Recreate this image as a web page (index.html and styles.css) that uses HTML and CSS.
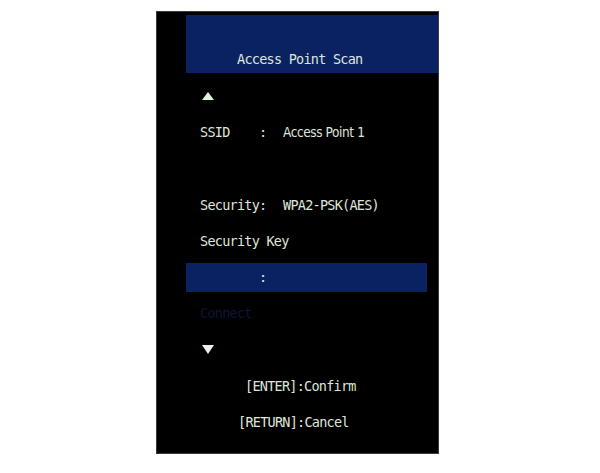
FILE: index.html
```html
<!DOCTYPE html>
<html>
<head>
<meta charset="utf-8">
<link rel="stylesheet" href="styles.css">
</head>
<body>
<div class="screen">
  <div class="header"><span class="title">Access Point Scan</span></div>
  <div class="rows">
    <div class="row"><svg class="tri" width="12" height="8" viewBox="0 0 12 8"><polygon points="6,0 12,8 0,8"/></svg></div>
    <div class="row"><span class="lbl">SSID</span><span class="colon">:</span><span class="val prop">Access Point 1</span></div>
    <div class="row"></div>
    <div class="row"><span class="lbl2">Security:</span><span class="val">WPA2-PSK(AES)</span></div>
    <div class="row"><span>Security Key</span></div>
    <div class="row sel"><div class="bar"><span class="colon">:</span></div></div>
    <div class="row dim"><span>Connect</span></div>
    <div class="row"><svg class="tri" width="12" height="9" viewBox="0 0 12 9"><polygon points="0,0 12,0 6,9"/></svg></div>
    <div class="row center"><span class="enter">[ENTER]:Confirm</span></div>
    <div class="row center"><span class="ret">[RETURN]:Cancel</span></div>
  </div>
</div>
</body>
</html>
```
FILE: styles.css
```css
html, body {
  margin: 0;
  padding: 0;
  background: #ffffff;
}
body {
  padding: 11px 0 0 156px;
}
.screen {
  width: 281px;
  height: 441px;
  background: #000;
  border: 1px solid #3a3a3a;
  display: flex;
  flex-direction: column;
  font-family: "DejaVu Sans Mono", monospace;
  font-size: 13.5px;
  letter-spacing: -0.75px;
  color: #dfe6dc;
}
.header {
  margin: 3px 0 0 29px;
  height: 58px;
  background: #0b2262;
  display: flex;
  align-items: flex-end;
  padding-left: 51px;
  padding-bottom: 0;
  box-sizing: border-box;
}
.title {
  line-height: 16px;
  margin-bottom: 6px;
}
.rows {
  margin-top: 5px;
  display: flex;
  flex-direction: column;
}
.row {
  height: 36.2px;
  display: flex;
  align-items: center;
  padding-left: 43px;
  white-space: pre;
}
.tri {
  fill: #e4f2e2;
  margin-left: 2px;
}
.lbl {
  width: 59px;
}
.colon {
  width: 24px;
}
.lbl2 {
  width: 83px;
}
.prop {
  font-family: "DejaVu Sans Condensed", "DejaVu Sans", sans-serif;
  font-stretch: condensed;
  font-size: 13.5px;
  letter-spacing: -0.4px;
}
.sel {
  padding-left: 29px;
}
.bar {
  width: 241px;
  height: 29px;
  background: #0b2262;
  display: flex;
  align-items: center;
  padding-left: 73px;
  box-sizing: border-box;
}
.dim {
  color: #0a1636;
}
.center {
  padding-left: 0;
}
.enter {
  margin-left: 88px;
}
.ret {
  margin-left: 81px;
}
```
